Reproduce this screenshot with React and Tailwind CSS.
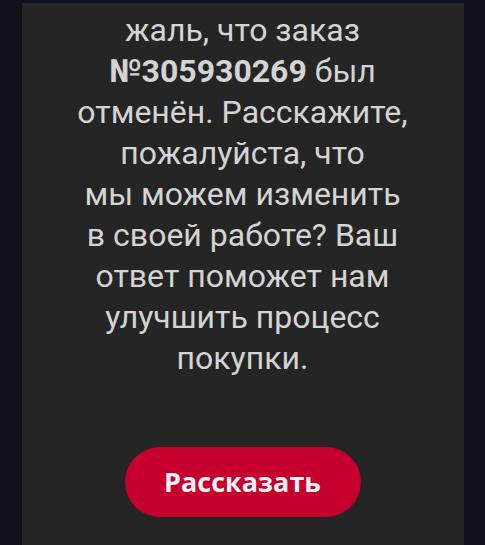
export default function App() {
  return (
    <div className="w-[485px] h-[545px] bg-[#0d121b] flex justify-center overflow-hidden">
      <div className="w-[442px] mt-[3px] bg-[#252525] flex flex-col items-center">
        <p
          className="mt-[7px] text-center text-[32px] leading-[41px] text-[#d4d4d4] whitespace-nowrap"
          style={{ fontFamily: "Roboto, sans-serif" }}
        >
          жаль, что заказ
          <br />
          <b className="font-bold">№305930269</b> был
          <br />
          отменён. Расскажите,
          <br />
          пожалуйста, что
          <br />
          мы можем изменить
          <br />
          в своей работе? Ваш
          <br />
          ответ поможет нам
          <br />
          улучшить процесс
          <br />
          покупки.
        </p>
        <button
          className="mt-[68px] w-[236px] h-[70px] rounded-full bg-[#c5002e] text-[#f7f2f4] text-[27px] font-bold"
          style={{ fontFamily: "'Open Sans', sans-serif" }}
        >
          Рассказать
        </button>
      </div>
    </div>
  );
}
